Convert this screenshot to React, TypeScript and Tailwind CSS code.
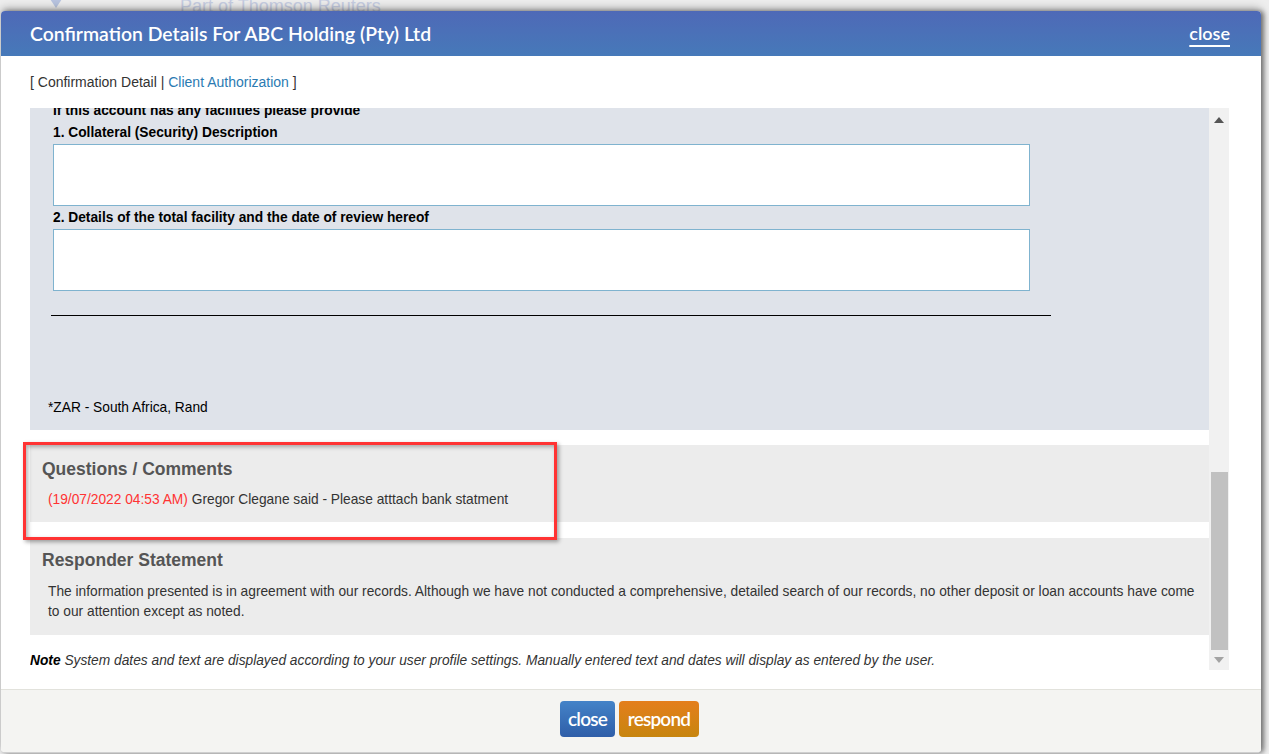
import React from "react";

const arial = "font-['Liberation_Sans',Arial,sans-serif]";
const avenir = "font-['Lato','Open_Sans',sans-serif]";

function ScrollBar() {
  return (
    <div className="flex w-[20px] flex-col items-center bg-[#f1f1f1]">
      <div className="flex h-[24px] w-full items-center justify-center">
        <svg width="10" height="6" viewBox="0 0 10 6">
          <path d="M0 6 L5 0 L10 6 Z" fill="#555" />
        </svg>
      </div>
      <div className="h-[340px]" />
      <div className="h-[178px] w-[17px] bg-[#c1c1c1]" />
      <div className="flex h-[20px] w-full items-center justify-center">
        <svg width="10" height="6" viewBox="0 0 10 6">
          <path d="M0 0 L10 0 L5 6 Z" fill="#a3a3a3" />
        </svg>
      </div>
    </div>
  );
}

function FacilitiesPanel() {
  return (
    <div className="bg-[#dfe3ea] pb-[14px] pl-[23px] text-[13.75px] text-black">
      <div className="-mt-[5px] h-[16px] font-bold leading-[16px]">
        If this account has any facilities please provide
      </div>
      <div className="mt-[6px] h-[16px] font-bold leading-[16px]">
        1. Collateral (Security) Description
      </div>
      <div className="mt-[3px] h-[62px] w-[977px] border border-[#7fb3cf] bg-white" />
      <div className="mt-[4px] h-[16px] font-bold leading-[16px]">
        2. Details of the total facility and the date of review hereof
      </div>
      <div className="mt-[3px] h-[62px] w-[977px] border border-[#7fb3cf] bg-white" />
      <div className="-ml-[2px] mt-[24px] h-px w-[1000px] bg-black" />
      <div className="-ml-[5px] mt-[84px] h-[16px] leading-[16px]">
        *ZAR - South Africa, Rand
      </div>
    </div>
  );
}

export default function App() {
  return (
    <div
      className={`relative h-[754px] w-[1269px] overflow-hidden bg-[#eeeeee] ${arial}`}
    >
      {/* page behind the dialog */}
      <div className="absolute left-[48px] top-[-4px] h-0 w-0 border-l-[8px] border-r-[8px] border-t-[12px] border-l-transparent border-r-transparent border-t-[#b8c4e0]" />
      <div className="absolute left-[180px] top-[-7px] text-[18px] text-[#c6cde2]">
        Part of Thomson Reuters
      </div>

      <div className="relative ml-[1px] mt-[11px] flex h-[742px] w-[1260px] flex-col overflow-hidden rounded-[4px] border-b border-[#cfcfcf] bg-white shadow-[3px_0_5px_rgba(0,0,0,0.45),0_-3px_8px_rgba(0,0,0,0.25)]">
        {/* header */}
        <div className="flex h-[45px] shrink-0 items-center justify-between bg-gradient-to-b from-[#4e69b7] to-[#4679b9] pl-[29px] pr-[31px]">
          <div className={`${avenir} text-[19.4px] font-semibold text-white`}>
            Confirmation Details For ABC Holding (Pty) Ltd
          </div>
          <div
            className={`${avenir} text-[18px] font-semibold text-white underline decoration-[2px] underline-offset-[5px]`}
          >
            close
          </div>
        </div>

        {/* tabs */}
        <div className="flex h-[52px] shrink-0 items-center whitespace-pre pl-[29px] text-[14px] text-[#333]">
          <span>[ Confirmation Detail | </span>
          <span className="text-[#2b7bb2]">Client Authorization</span>
          <span> ]</span>
        </div>

        {/* scrolling content */}
        <div className="ml-[29px] flex h-[562px] w-[1199px] shrink-0">
          <div className="flex w-[1179px] flex-col overflow-hidden">
            <FacilitiesPanel />
            <div className="h-[15px] shrink-0" />
            <div className="relative h-[77px] shrink-0 bg-[#ececec] px-[12px]">
              <div className="pt-[14px] text-[17.5px] font-bold leading-[20px] text-[#555]">
                Questions / Comments
              </div>
              <div className="mt-[13px] pl-[6px] text-[13.75px] leading-[16px] text-[#333]">
                <span className="text-[#ff3333]">(19/07/2022 04:53 AM)</span>{" "}
                Gregor Clegane said - Please atttach bank statment
              </div>
            </div>
            <div className="h-[16px] shrink-0" />
            <div className="h-[97px] shrink-0 bg-[#ececec] pl-[12px] pr-[4px]">
              <div className="pt-[12px] text-[17.5px] font-bold leading-[20px] text-[#555]">
                Responder Statement
              </div>
              <div className="mt-[12px] pl-[6px] text-[13.75px] leading-[20px] text-[#333]">
                The information presented is in agreement with our records.
                Although we have not conducted a comprehensive, detailed search
                of our records, no other deposit or loan accounts have come to
                our attention except as noted.
              </div>
            </div>
            <div className="mt-[18px] text-[13.75px] italic leading-[16px] text-[#333]">
              <span className="font-bold text-black">Note</span> System dates
              and text are displayed according to your user profile settings.
              Manually entered text and dates will display as entered by the
              user.
            </div>
          </div>
          <ScrollBar />
        </div>

        <div className="flex-1" />

        {/* footer */}
        <div className="flex h-[63px] shrink-0 items-start justify-center gap-[4px] border-t border-[#e2e2dc] bg-[#f4f4f2] pr-[3px] pt-[11px]">
          <div
            className={`${avenir} flex h-[36px] w-[55px] items-center justify-center rounded-[4px] bg-gradient-to-b from-[#4483c8] to-[#2f5ea8] text-[19px] font-semibold tracking-[-0.8px] text-white`}
          >
            close
          </div>
          <div
            className={`${avenir} flex h-[36px] w-[80px] items-center justify-center rounded-[4px] bg-gradient-to-b from-[#e47e1c] to-[#c7850e] text-[19px] font-semibold tracking-[-0.8px] text-white`}
          >
            respond
          </div>
        </div>
      </div>

      {/* annotation highlight */}
      <div className="absolute left-[23px] top-[442px] h-[98px] w-[534px] border-[3px] border-[#ff3333] shadow-[2px_2px_4px_rgba(0,0,0,0.35),inset_2px_2px_4px_rgba(0,0,0,0.3)]" />
    </div>
  );
}
